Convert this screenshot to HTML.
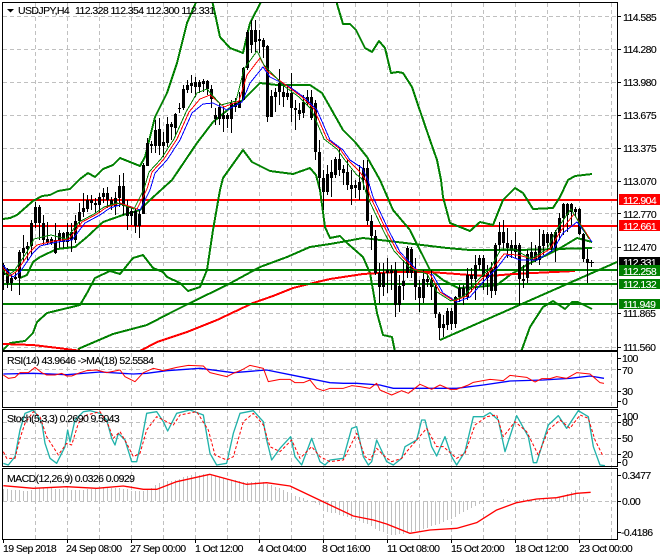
<!DOCTYPE html>
<html><head><meta charset="utf-8"><title>USDJPY,H4</title>
<style>
html,body{margin:0;padding:0;background:#fff}
svg{display:block}
text{font-family:"Liberation Sans",sans-serif;font-size:10.5px;letter-spacing:-.58px;fill:#000;stroke:#000;stroke-width:.12px}
.w{fill:#fff;stroke:#fff}
</style></head><body>
<svg width="660" height="560" viewBox="0 0 660 560" xmlns="http://www.w3.org/2000/svg">
<defs>
<clipPath id="m"><rect x="3" y="3" width="614" height="347"/></clipPath>
<clipPath id="r"><rect x="3" y="352" width="614" height="55"/></clipPath>
<clipPath id="s"><rect x="3" y="410" width="614" height="56"/></clipPath>
</defs>
<rect width="660" height="560" fill="#fff"/>
<!-- grid -->
<g stroke="#c0c0c0" fill="none" stroke-dasharray="4 3" shape-rendering="crispEdges">
<path d="M35.5 3V539M67.5 3V539M99.5 3V539M131.5 3V539M163.5 3V539M195.5 3V539M227.5 3V539M259.5 3V539M291.5 3V539M323.5 3V539M355.5 3V539M387.5 3V539M419.5 3V539M451.5 3V539M483.5 3V539M515.5 3V539M547.5 3V539M579.5 3V539M611.5 3V539"/>
<path d="M3 16.5H617M3 49.5H617M3 82.5H617M3 115.5H617M3 148.5H617M3 181.5H617M3 213.5H617M3 247.5H617M3 280.5H617M3 313.5H617M3 347.5H617"/>
<path d="M3 369.5H617M3 391.5H617M3 422.5H617M3 438.5H617M3 454.5H617M3 501.5H617"/>
</g>
<path d="M3 262.5H617" stroke="#c0c0c0" shape-rendering="crispEdges"/>
<!-- horizontal levels -->
<g fill="none" stroke-width="2" shape-rendering="crispEdges">
<path d="M3 200H617M3 226H617" stroke="#f00"/>
</g>
<!-- bands and trend -->
<g clip-path="url(#m)" fill="none" stroke="#008000" stroke-width="2" stroke-linejoin="round" shape-rendering="crispEdges">
<path d="M3 219L10 218 17 215 25 208 33 201 42 196 50 195 58 191 70 189 80 179 88 173 95 177 103 169 113 165 120 158 130 162 140 166 145 157 155 117 167 93 177 63 187 23 197 0"/>
<path d="M212 0L217 23 220 37 230 48 243 53 250 23 262 0"/>
<path d="M336 0L337 4 343 24 350 24 356 30 365 48 372 52 379 41 385 48 391 73 398 72 403 73 412 87 418 105 430 140 437 160 441 180 443 197 450 223 470 231 480 222 493 225 503 200 515 188 523 193 533 209 553 208 560 197 568 180 575 176 592 174"/>
<path d="M20 278L27 275 33 262 40 257 57 249 75 247 87 237 103 222 123 215 140 210 150 200 172 180 197 143 213 122 230 108 243 100 260 83 277 85 310 85 322 93 330 107 343 130 355 142 367 157 380 180 393 210 410 230 430 270 443 280 458 288 477 287 497 285 510 275 530 263 557 250 577 238 592 242"/>
<path d="M3 350L10 343 25 341 33 333 37 322 47 313 80 305 87 293 95 278 110 271 120 274 133 258 143 255 153 268 163 272 167 277 180 283 188 291 200 287 207 270 213 230 220 190 223 178 243 150 252 162 270 171 293 174 310 168 316 175 320 190 325 227 330 238 340 236 347 243 363 257 370 273 377 313 383 335 392 337 395 352"/>
<path d="M521 352L530 327 543 307 553 301 565 309 572 302 578 302 592 309"/>
<path d="M78 349L113 334 147 325 170 313 190 303 227 285 260 267 287 257 310 247 330 244 347 241 363 238 397 242 447 248 470 250 517 250 557 249 592 248"/>
<path d="M3 344L33 345 58 348 82 351M140 351L157 342 187 332 217 320 253 303 273 296 293 288 313 283 330 279 363 274 397 272 430 272 470 275 490 276 513 274 575 271" stroke="#f00"/>
<path d="M440 340L617 262"/>
</g>
<path d="M3 270H617M3 284H617M3 304H617" stroke="#008000" stroke-width="2" shape-rendering="crispEdges"/>
<!-- candles -->
<g clip-path="url(#m)" fill="none" shape-rendering="crispEdges">
<path stroke="#000" d="M3.5 263V290M7.5 268V288M11.5 275V291M15.5 272V280M19.5 250V295M23.5 235V262M27.5 242V260M31.5 220V256M35.5 202V228M39.5 205V240M43.5 215V245M47.5 222V245M51.5 237V245M55.5 223V254M59.5 230V248M63.5 232V248M67.5 223V247M71.5 223V252M75.5 215V243M79.5 203V225M83.5 193V217M87.5 195V212M91.5 195V210M95.5 198V213M99.5 193V213M103.5 188V203M107.5 187V208M111.5 197V210M115.5 192V215M119.5 175V207M123.5 173V215M127.5 200V230M131.5 207V225M135.5 208V233M139.5 210V238M143.5 163V214M147.5 138V166M151.5 141V153M155.5 120V153M159.5 118V155M163.5 132V157M167.5 117V147M171.5 122V140M175.5 113V135M179.5 103V113M183.5 85V110M187.5 80V93M191.5 75V93M195.5 77V97M199.5 80V93M203.5 79V92M207.5 80V95M211.5 85V108M215.5 108V125M219.5 103V125M223.5 107V132M227.5 113V128M231.5 100V133M235.5 98V112M239.5 92V108M243.5 67V100M247.5 30V70M251.5 20V53M255.5 20V52M259.5 30V53M263.5 38V58M267.5 45V122M271.5 90V117M275.5 88V112M279.5 69V105M283.5 83V107M287.5 85V100M291.5 73V122M295.5 100V130M299.5 103V120M303.5 95V118M307.5 90V105M311.5 90V120M315.5 100V160M319.5 140V190M323.5 170V210M327.5 165V195M331.5 160V197M335.5 157V178M339.5 147V176M343.5 165V185M347.5 160V190M351.5 170V205M355.5 180V198M359.5 165V200M363.5 160V190M367.5 160V225M371.5 215V250M375.5 230V275M379.5 263V303M383.5 263V296M387.5 258V293M391.5 265V290M395.5 262V317M399.5 275V312M403.5 260V300M407.5 246V278M411.5 247V278M415.5 258V300M419.5 280V312M423.5 270V303M427.5 273V287M431.5 270V300M435.5 285V318M439.5 312V340M443.5 315V337M447.5 308V330M451.5 308V330M455.5 296V328M459.5 285V302M463.5 285V305M467.5 268V300M471.5 268V292M475.5 255V300M479.5 255V270M483.5 255V290M487.5 265V295M491.5 262V298M495.5 243V295M499.5 222V250M503.5 220V250M507.5 228V258M511.5 240V258M515.5 232V258M519.5 243V305M523.5 265V288M527.5 250V283M531.5 242V265M535.5 245V262M539.5 229V265M543.5 230V255M547.5 232V250M551.5 232V252M555.5 230V262M559.5 213V240M563.5 203V235M567.5 203V232M571.5 203V225M575.5 207V216M579.5 208V235M583.5 233V262M587.5 249V283M591.5 260V267M589 262.5H594"/>
<path id="gb" stroke="#000" stroke-width="3" d="M3.5 265V275M11.5 278V283M15.5 277V279M19.5 252V278M23.5 248V253M27.5 246V249M31.5 223V246M35.5 207V223M47.5 239V243M51.5 239V243M55.5 240V253M59.5 233V241M67.5 232V242M75.5 221V240M79.5 212V221M83.5 208V212M87.5 200V209M91.5 200V203M95.5 203V205M99.5 197V205M103.5 193V197M111.5 200V206M115.5 198V206M119.5 186V198M131.5 211V216M139.5 214V226M143.5 165V214M147.5 143V166M151.5 144V146M155.5 130V146M163.5 142V146M167.5 124V143M175.5 114V128M179.5 108V109M183.5 89V108M187.5 85V90M191.5 83V86M195.5 82V87M199.5 82V87M203.5 81V84M215.5 115V119M223.5 115V119M231.5 103V119M235.5 103V107M243.5 68V100M247.5 32V68M251.5 30V45M271.5 96V117M275.5 92V97M279.5 83V92M287.5 93V97M295.5 108V110M303.5 102V113M307.5 97V103M327.5 174V192M331.5 172V178M335.5 159V175M343.5 169V173M355.5 185V188M359.5 182V190M363.5 168V180M379.5 273V287M387.5 270V273M391.5 270V273M399.5 286V305M403.5 281V286M407.5 248V273M423.5 279V298M427.5 279V282M443.5 324V328M447.5 311V325M455.5 297V324M459.5 288V297M463.5 288V297M467.5 275V297M475.5 265V279M479.5 258V265M487.5 273V278M495.5 245V291M499.5 232V245M511.5 245V250M515.5 245V252M527.5 254V278M531.5 252V260M539.5 246V260M543.5 234V246M555.5 232V248M559.5 218V233M563.5 204V218M575.5 209V212"/>
<path id="rb" stroke="#000" stroke-width="3" d="M7.5 269V283M39.5 207V223M43.5 223V240M63.5 233V242M71.5 232V240M107.5 193V200M123.5 186V206M127.5 206V216M135.5 211V226M159.5 129V146M171.5 124V127M207.5 81V89M211.5 89V99M219.5 107V119M227.5 115V119M239.5 101V108M255.5 30V42M259.5 39V41M263.5 40V47M267.5 46V117M283.5 92V97M291.5 93V108M299.5 110V114M311.5 97V118M315.5 103V152M319.5 152V178M323.5 178V192M339.5 159V170M347.5 172V185M351.5 185V189M367.5 168V221M371.5 221V236M375.5 236V273M383.5 273V287M395.5 270V305M411.5 249V273M415.5 270V287M419.5 287V298M431.5 280V287M435.5 287V314M439.5 314V328M451.5 311V324M471.5 275V279M483.5 258V277M491.5 268V291M503.5 232V243M507.5 243V248M519.5 245V279M523.5 279V281M535.5 252V260M547.5 234V243M551.5 234V248M567.5 204V215M571.5 204V212M579.5 209V234M583.5 234V259M587.5 259V263"/>
<use href="#gb" style="stroke:#008000;stroke-width:1"/>
<use href="#rb" style="stroke:#f00;stroke-width:1"/>
</g>
<!-- MAs -->
<g clip-path="url(#m)" fill="none" stroke-linejoin="round" shape-rendering="crispEdges">
<path id="ma" stroke="#00f" d="M3 265L13 277 20 272 33 253 40 246 57 242 72 240 85 223 100 215 110 208 123 204 140 210 150 190 155 173 167 160 180 140 192 113 203 104 213 103 227 110 242 102 250 83 263 67 270 77 290 87 305 98 317 110 330 140 343 150 350 160 362 168 368 180 373 197 390 233 400 252 417 270 433 275 443 293 457 302 470 297 483 282 497 268 507 255 520 260 537 260 553 250 563 233 577 222 592 242"/>
<path stroke="#f00" transform="translate(-3 -1)" d="M3 265L13 277 20 272 33 253 40 246 57 242 72 240 85 223 100 215 110 208 123 204 140 210 150 190 155 173 167 160 180 140 192 113 203 100 213 96 227 108 242 102 250 76 263 59 270 72 290 87 305 98 317 110 330 140 343 150 350 160 362 172 368 180 373 197 390 233 400 252 417 270 433 275 443 293 457 302 470 297 483 282 497 268 507 255 520 256 537 260 553 250 563 233 577 215 593 240"/>
<path stroke="#008000" transform="translate(-6 -1)" d="M3 262L13 277 20 272 33 253 40 240 57 236 72 240 85 223 100 215 110 208 123 204 140 210 150 190 155 173 167 160 180 140 192 113 203 94 213 90 227 106 242 102 250 70 263 52 270 66 290 87 305 98 317 110 330 140 343 150 350 160 362 175 368 180 373 197 390 233 400 252 417 270 433 275 443 293 457 302 470 297 483 282 497 268 507 250 520 250 537 260 553 250 563 230 577 210 595 240"/>
</g>
<!-- RSI -->
<g clip-path="url(#r)" fill="none">
<g transform="translate(0 350) scale(.33333)" stroke-width="3" stroke-linejoin="round">
<path stroke="#00f" stroke-width="4" d="M10 72L100 70 200 74 300 66 400 72 440 70 500 62 600 55 700 68 800 60 900 80 990 98L1030 100 1070 100 1140 105 1180 115 1270 115 1370 115 1450 105 1530 93 1630 90 1710 85 1770 78 1812 85"/>
<path stroke="#f00" d="M10 75L25 85 45 82 60 68 85 68 105 52 125 68 140 75 165 75 185 70 200 78 215 78 240 68 260 62 290 60 320 68 360 60 375 80 405 95 430 68 460 55 490 62 530 52 565 46 610 48 630 68 680 80 700 70 725 60 750 46 790 55 805 95 840 88 870 88 885 98 910 98 930 90 950 115 970 122 990 115L1030 115 1055 107 1080 110 1110 115 1130 100 1140 120 1175 135 1205 122 1225 130 1260 103 1295 118 1320 105 1350 118 1370 118 1405 105 1420 97 1470 88 1510 92 1530 76 1580 82 1605 96 1625 86 1650 86 1670 80 1700 85 1730 68 1770 72 1800 98 1812 100"/>
</g></g>
<!-- Stoch -->
<g clip-path="url(#s)" fill="none">
<g transform="translate(0 350) scale(.33333)" stroke-width="3" stroke-linejoin="round">
<path stroke="#20b2aa" stroke-width="4" d="M10 340L25 345 45 320 60 240 75 190 100 180 125 215 135 280 150 325 170 340 195 290 203 240 210 275 225 210 250 185 270 182 300 190 320 210 335 265 345 285 355 250 375 270 395 335 410 335 425 270 440 190 470 185 490 215 503 243 530 190 570 180 610 195 630 310 650 345 680 340 700 250 720 190 760 182 790 215 800 270 815 330 840 295 872 260 885 320 905 345 935 265 960 335 975 345 990 330L1030 325 1055 235 1070 230 1090 320 1105 345 1115 335 1130 270 1160 335 1180 345 1205 325 1215 290 1250 270 1265 210 1275 210 1295 290 1310 318 1335 260 1355 320 1370 345 1395 305 1420 200 1450 200 1470 188 1495 210 1515 305 1550 197 1585 260 1600 338 1610 338 1645 225 1675 197 1700 235 1735 182 1765 200 1780 290 1800 345 1815 347"/>
<path stroke="#f00" stroke-dasharray="9 6" d="M10 305L20 325 45 325 60 265 75 220 100 185 120 200 140 260 175 315 200 280 215 285 235 220 260 195 300 185 325 225 340 265 360 245 380 280 400 320 420 310 440 240 470 200 500 215 520 225 540 195 590 185 625 240 645 315 680 330 700 320 730 215 760 190 790 225 810 290 840 305 875 270 900 325 935 290 960 320 990 335L1030 330 1070 250 1095 320 1110 330 1130 295 1155 320 1175 335 1205 325 1220 305 1250 270 1280 235 1310 290 1330 290 1370 325 1395 310 1425 225 1460 200 1490 195 1510 260 1545 215 1580 245 1615 315 1645 240 1680 210 1710 235 1740 195 1765 205 1785 270 1810 320"/>
</g></g>
<!-- MACD histogram -->
<path stroke="#c0c0c0" fill="none" shape-rendering="crispEdges" d="M3.5 501V489M7.5 501V489M11.5 501V490M15.5 501V490M19.5 501V490M23.5 501V491M27.5 501V491M31.5 501V490M35.5 501V489M39.5 501V488M43.5 501V488M47.5 501V488M51.5 501V488M55.5 501V489M59.5 501V489M63.5 501V489M67.5 501V489M71.5 501V490M75.5 501V490M79.5 501V490M83.5 501V490M87.5 501V489M91.5 501V489M95.5 501V489M99.5 501V488M103.5 501V488M107.5 501V488M111.5 501V488M115.5 501V488M119.5 501V488M123.5 501V489M127.5 501V489M131.5 501V491M135.5 501V491M139.5 501V491M143.5 501V491M147.5 501V490M151.5 501V488M155.5 501V485M159.5 501V483M163.5 501V482M167.5 501V481M171.5 501V481M175.5 501V480M179.5 501V479M183.5 501V477M187.5 501V476M191.5 501V475M195.5 501V475M199.5 501V475M203.5 501V474M207.5 501V474M211.5 501V475M215.5 501V476M219.5 501V477M223.5 501V478M227.5 501V479M231.5 501V480M235.5 501V480M239.5 501V481M243.5 501V482M247.5 501V482M251.5 501V482M255.5 501V482M259.5 501V482M263.5 501V482M267.5 501V484M271.5 501V485M275.5 501V487M279.5 501V488M283.5 501V490M287.5 501V492M291.5 501V494M295.5 501V496M299.5 501V497M303.5 501V498M307.5 501V500M315.5 501V503M319.5 501V505M323.5 501V508M327.5 501V512M331.5 501V513M335.5 501V513M339.5 501V515M343.5 501V516M347.5 501V517M351.5 501V519M355.5 501V520M359.5 501V521M363.5 501V523M367.5 501V524M371.5 501V526M375.5 501V529M379.5 501V531M383.5 501V532M387.5 501V534M391.5 501V535M395.5 501V535M399.5 501V534M403.5 501V534M407.5 501V533M411.5 501V532M415.5 501V531M419.5 501V530M423.5 501V529M427.5 501V528M431.5 501V526M435.5 501V525M439.5 501V524M443.5 501V522M447.5 501V520M451.5 501V519M455.5 501V517M459.5 501V514M463.5 501V512M467.5 501V510M471.5 501V508M475.5 501V506M479.5 501V504M483.5 501V504M487.5 501V502M503.5 501V499M507.5 501V500M519.5 501V500M523.5 501V499M527.5 501V499M531.5 501V500M535.5 501V499M539.5 501V499M543.5 501V499M547.5 501V499M551.5 501V499M555.5 501V498M559.5 501V497M563.5 501V496M567.5 501V494M571.5 501V492M575.5 501V490M579.5 501V493M583.5 501V497M587.5 501V499"/>
<g fill="none" stroke="#f00" stroke-linejoin="round" transform="translate(0 350) scale(.33333)">
<path stroke-width="4" d="M10 407L100 415 200 410 290 415 370 408 430 418 470 418 530 395 630 373 740 403 800 398 870 408 990 465L1060 498 1120 510 1160 522 1230 550 1290 540 1370 535 1430 518 1490 480 1550 458 1610 447 1670 443 1730 430 1772 427"/>
</g>
<!-- frames -->
<g fill="none" stroke="#000" shape-rendering="crispEdges">
<path d="M2.5 2.5H617.5V350.5H2.5ZM2.5 351.5H617.5V407.5H2.5ZM2.5 409.5H617.5V466.5H2.5ZM2.5 468.5H617.5V539.5H2.5Z"/>
<path d="M617 16.5h4M617 49.5h4M617 82.5h4M617 115.5h4M617 148.5h4M617 181.5h4M617 213.5h4M617 247.5h4M617 313.5h4M617 347.5h4M617 358.5h4M617 369.5h4M617 391.5h4M617 401.5h4M617 415.5h4M617 422.5h4M617 438.5h4M617 454.5h4M617 462.5h4M617 475.5h4M617 501.5h4M617 532.5h4M3.5 539v4M67.5 539v4M131.5 539v4M195.5 539v4M259.5 539v4M323.5 539v4M387.5 539v4M451.5 539v4M515.5 539v4M579.5 539v4"/>
</g>
<!-- titles -->
<path d="M7 9h7l-3.500 3.500z" fill="#000"/>
<text x="18" y="14">USDJPY,H4</text>
<text x="75" y="14">112.328 112.354 112.300 112.331</text>
<text x="7" y="364">RSI(14) 43.9646 -&gt;MA(18) 52.5584</text>
<text x="7" y="422">Stoch(5,3,3) 0.2690 9.5043</text>
<text x="7" y="482">MACD(12,26,9) 0.0326 0.0929</text>
<!-- right axis -->
<text x="623" y="21">114.585</text>
<text x="623" y="53">114.280</text>
<text x="623" y="86">113.980</text>
<text x="623" y="119">113.675</text>
<text x="623" y="152">113.375</text>
<text x="623" y="185">113.070</text>
<text x="623" y="218">112.770</text>
<text x="623" y="251">112.470</text>
<text x="623" y="317">111.865</text>
<text x="623" y="351">111.560</text>
<text x="622" y="362">100</text>
<text x="622" y="374">70</text>
<text x="622" y="395">30</text>
<text x="622" y="405">0</text>
<text x="622" y="420">100</text>
<text x="622" y="426">80</text>
<text x="622" y="442">50</text>
<text x="622" y="458">20</text>
<text x="622" y="466">0</text>
<text x="622" y="479">0.3477</text>
<text x="622" y="505">0.00</text>
<text x="621" y="536">-0.4186</text>
<!-- price labels -->
<g shape-rendering="crispEdges">
<rect x="619" y="194" width="41" height="11" fill="#f00"/>
<rect x="619" y="220" width="41" height="11" fill="#f00"/>
<rect x="619" y="257" width="41" height="9" fill="#000"/>
<rect x="619" y="279" width="41" height="10" fill="#008000"/>
<rect x="619" y="299" width="41" height="10" fill="#008000"/>
</g>
<text class="w" x="623" y="204">112.904</text>
<text class="w" x="623" y="230">112.661</text>
<text class="w" x="623" y="266">112.331</text>
<rect x="619" y="265" width="41" height="11" fill="#008000" shape-rendering="crispEdges"/>
<text class="w" x="623" y="275">112.258</text>
<text class="w" x="623" y="288">112.132</text>
<text class="w" x="623" y="308">111.949</text>
<!-- time axis -->
<text x="3" y="552">19 Sep 2018</text>
<text x="66" y="552">24 Sep 08:00</text>
<text x="130" y="552">27 Sep 00:00</text>
<text x="195" y="552">1 Oct 12:00</text>
<text x="258" y="552">4 Oct 04:00</text>
<text x="322" y="552">8 Oct 16:00</text>
<text x="387" y="552">11 Oct 08:00</text>
<text x="451" y="552">15 Oct 20:00</text>
<text x="515" y="552">18 Oct 12:00</text>
<text x="579" y="552">23 Oct 00:00</text>
</svg>
</body></html>
